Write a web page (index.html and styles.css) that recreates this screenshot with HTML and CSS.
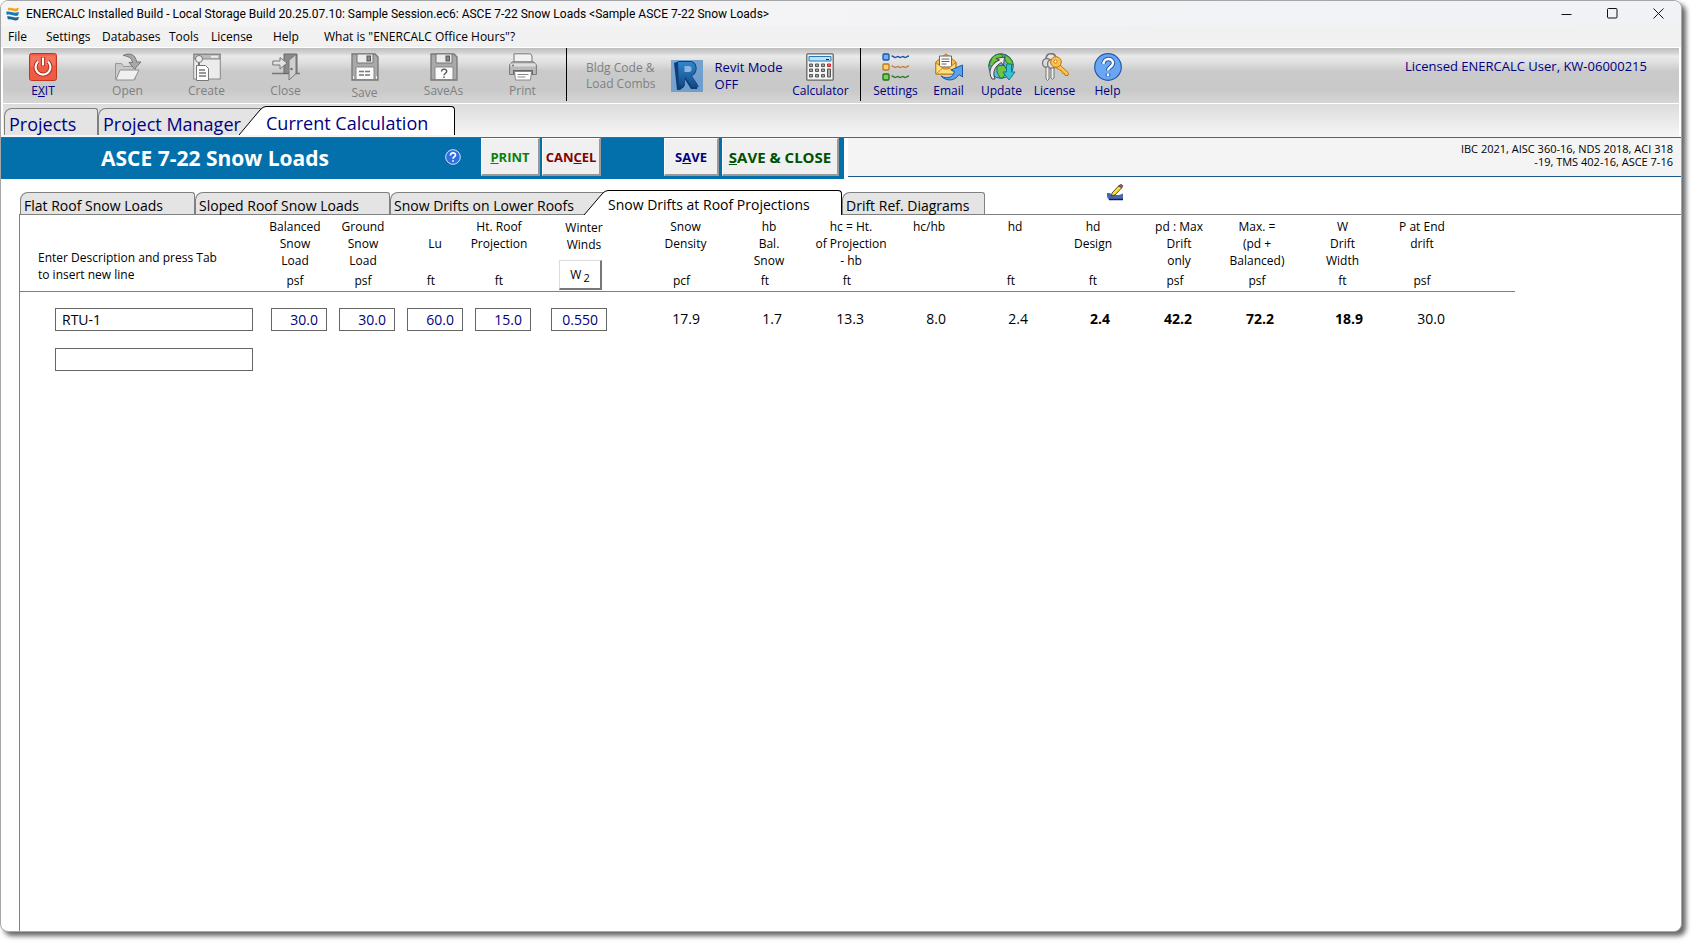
FILE: index.html
```html
<!DOCTYPE html>
<html lang="en">
<head>
<meta charset="utf-8">
<title>ENERCALC - ASCE 7-22 Snow Loads</title>
<link rel="stylesheet" href="styles.css">
</head>
<body>
<div class="window">
  <header class="titlebar">
    <svg class="app-icon" width="14" height="14" viewBox="0 0 14 14"><path d="M2 1c4-1 5 2 11-.5L12 4C8 5.500 6 2.500 2 3.500z" fill="#f5a623"/><path d="M0 5c4-1.500 6 2 13 0l-1 3.500C8 10 5 6.500 1 8z" fill="#1878b8"/><path d="M1 9.500c4-1 6 2 12 .5l-1 3C8 14.500 6 11.500 2 12.500z" fill="#1565a0"/></svg>
    <span class="title-text">ENERCALC Installed Build - Local Storage Build 20.25.07.10: Sample Session.ec6: ASCE 7-22 Snow Loads &lt;Sample ASCE 7-22 Snow Loads&gt;</span>
    <div class="win-controls">
      <button aria-label="Minimize"><svg width="11" height="11" viewBox="0 0 11 11"><path d="M.5 6.500h10" stroke="#111"/></svg></button>
      <button aria-label="Maximize"><svg width="11" height="11" viewBox="0 0 11 11"><rect x=".5" y=".5" width="9.500" height="9.500" rx="1" fill="none" stroke="#111"/></svg></button>
      <button aria-label="Close window"><svg width="11" height="11" viewBox="0 0 11 11"><path d="M.5.5l10 10M10.500.5l-10 10" stroke="#111"/></svg></button>
    </div>
  </header>
  <nav class="menubar">
    <button class="m-file">File</button><button class="m-settings">Settings</button><button class="m-data">Databases</button><button class="m-tools">Tools</button><button class="m-license">License</button><button class="m-help">Help</button><button>What is "ENERCALC Office Hours"?</button>
  </nav>

  <div class="toolbar">
    <div class="group files">
      <button class="tool exit">
        <svg width="28" height="28" viewBox="0 0 28 28"><rect x=".5" y=".5" width="27" height="27" rx="2" fill="#ef5a42" stroke="#c33422"/><path d="M1.500 14V2.500h25V12z" fill="#f58470" opacity=".6"/><path d="M9 8.500a7.500 7.500 0 1 0 10 0" fill="none" stroke="#a8281a" stroke-width="4"/><path d="M9 8.500a7.500 7.500 0 1 0 10 0" fill="none" stroke="#fff" stroke-width="2.200"/><path d="M14 4v9" stroke="#a8281a" stroke-width="4.200"/><path d="M14 4.500v8" stroke="#fff" stroke-width="2.200"/></svg>
        <span>E<u>X</u>IT</span></button>
      <button class="tool off">
        <svg width="28" height="28" viewBox="0 0 28 28"><path d="M1.500 26V10.500h6l2 3h12V26z" fill="#c8c8c8" stroke="#999"/><path d="M2 27l4-10h19l-5 10z" fill="#f0f0f0" stroke="#8e8e8e"/><path d="M9 2.500C16-1 22 2 22.500 9H27l-6.500 7L15 9.500h3.500C18 5 14 3 9 2.500z" fill="#a8a8a8" stroke="#777"/></svg>
        <span>Open</span></button>
      <button class="tool off">
        <svg width="28" height="28" viewBox="0 0 28 28"><rect x=".7" y="1" width="26.600" height="25" fill="#ececec" stroke="#888"/><path d="M1 1.500h26V6H1z" fill="#bbb" stroke="#888"/><path d="M18 3.700h7" stroke="#eee" stroke-width="2"/><circle cx="6" cy="6" r="3.500" fill="#eee" stroke="#777"/><path d="M6 9.500V13" stroke="#777" stroke-width="2"/><path d="M3.500 12.500h9l3 3v12h-12z" fill="#fff" stroke="#777"/><path d="M6 17h6M6 20h7M6 23h7" stroke="#777" stroke-width="1.300"/></svg>
        <span>Create</span></button>
      <button class="tool off">
        <svg width="28" height="28" viewBox="0 0 28 28"><path d="M0 20.500h28" stroke="#777" stroke-width="1.500"/><path d="M12 1h13v19.500H12z" fill="#8a8a8a" stroke="#666"/><path d="M17 7l7-5.500v19L17 27z" fill="#cfcfcf" stroke="#777"/><circle cx="19.500" cy="16" r="1.200" fill="#666"/><path d="M.8 8H8V4.500l7 5.500-7 6V12H.8z" fill="#e2e2e2" stroke="#777"/></svg>
        <span>Close</span></button>
      <button class="tool off low">
        <svg width="28" height="28" viewBox="0 0 28 28"><path d="M1 1h23l3 3v23H1z" fill="#a9a9a9" stroke="#777" stroke-width="1.300"/><path d="M6 1h16v9H6z" fill="#ececec" stroke="#777"/><rect x="16" y="3" width="3.500" height="5" fill="#888" stroke="#555"/><path d="M5 14h18v12.500H5z" fill="#fafafa" stroke="#888"/><path d="M8 18.500h12M8 22h12" stroke="#777" stroke-width="1.300" stroke-dasharray="5 1"/><path d="M2.500 23v3M25.500 23v3" stroke="#eee"/></svg>
        <span>Save</span></button>
      <button class="tool off">
        <svg width="28" height="28" viewBox="0 0 28 28"><path d="M1 1h23l3 3v23H1z" fill="#a9a9a9" stroke="#777" stroke-width="1.300"/><path d="M6 1h16v9H6z" fill="#ececec" stroke="#777"/><rect x="16" y="3" width="3.500" height="5" fill="#888" stroke="#555"/><path d="M5 14h18v12.500H5z" fill="#fafafa" stroke="#888"/><path d="M11.500 18.500c0-3.200 5.500-3 5.200 0-.2 1.800-2.600 1.700-2.600 3.800M14 23.600v1.500" fill="none" stroke="#555" stroke-width="1.400"/></svg>
        <span>SaveAs</span></button>
      <button class="tool off">
        <svg width="28" height="28" viewBox="0 0 28 28"><path d="M5 9V.8h16.500L23 3v6z" fill="#f2f2f2" stroke="#777"/><path d="M3 9h22l2.400 3v9.500H.6V12z" fill="#b9b9b9" stroke="#777"/><path d="M1.500 10.500h25v3h-25z" fill="#dedede"/><circle cx="4" cy="12.500" r=".9" fill="#666"/><path d="M4 17h20v4H4z" fill="#666"/><path d="M5.500 18.500h17l-1 8.500h-15z" fill="#fff" stroke="#888"/><path d="M8.500 21.500h11M8.500 24h8" stroke="#888"/></svg>
        <span>Print</span></button>
    </div>
    <div class="group modes">
      <button class="tool-text off">Bldg Code &amp;<br>Load Combs</button>
      <button class="tool-text revit">
        <svg width="32" height="32" viewBox="0 0 32 32"><defs><linearGradient id="rg" x1="0" y1="0" x2="1" y2="1"><stop offset="0" stop-color="#7fa6cf"/><stop offset="1" stop-color="#6c9ccc"/></linearGradient><linearGradient id="rf" x1="0" y1="0" x2="0" y2="1"><stop offset="0" stop-color="#2f86cf"/><stop offset="1" stop-color="#124a86"/></linearGradient></defs><path d="M0 0h32v32H0z" fill="url(#rg)"/><path d="M3 3l5-2h11c8 0 9 12 2 15l6 9-1 4h-6l-7-11v9l-4 3H6z" fill="#0d3f75"/><path d="M7 2h12c7 0 8 11 1 13.500L28 27h-7l-7-10.500V26H8z" fill="url(#rf)"/><path d="M13.500 6v6h4.500c3.500 0 3.500-6 0-6z" fill="#8fb4dc"/></svg>
        <span>Revit Mode<br>OFF</span></button>
      <button class="tool calc">
        <svg width="28" height="28" viewBox="0 0 28 28"><rect x=".8" y=".8" width="26.400" height="26.400" rx="1" fill="#f4f4f4" stroke="#666" stroke-width="1.300"/><path d="M3 3.500h22v4.500H3z" fill="#b8e4fb" stroke="#2878b8"/><path d="M20 6.500h3" stroke="#124"/><g fill="#aaa" stroke="#555"><path d="M3.500 11h3v2.500h-3zM9.500 11h3v2.500h-3zM15.500 11h3v2.500h-3zM3.500 16h3v2.500h-3zM9.500 16h3v2.500h-3zM15.500 16h3v2.500h-3zM3.500 21.500h3V24h-3zM9.500 21.500h3V24h-3zM15.500 21.500h3V24h-3zM21.500 16h3v8h-3z"/></g><path d="M21.500 11h3v2.500h-3z" fill="#ff6a5a" stroke="#c22"/></svg>
        <span>Calculator</span></button>
    </div>
    <div class="group links">
      <button class="tool">
        <svg width="28" height="28" viewBox="0 0 28 28"><rect x="1" y="1" width="6" height="6" rx="1" fill="#6cb0ff" stroke="#1e52a8" stroke-width="1.300"/><rect x="1" y="11" width="6" height="6" rx="1" fill="#ffd266" stroke="#b87a1c" stroke-width="1.300"/><rect x="1" y="21" width="6" height="6" rx="1" fill="#74d650" stroke="#256d1c" stroke-width="1.300"/><g fill="none" stroke-width="1.400"><path d="M9.500 3q1.500 0 2.500 1t2.500 0 2.500 0 2.500 0 2.500 0 2.500 0 2.500-1" stroke="#1e52a8"/><path d="M9.500 13q1.500 0 2.500 1t2.500 0 2.500 0 2.500 0 2.500 0 2.500 0 2.500-1" stroke="#c8803a"/><path d="M9.500 23q1.500 0 2.500 1t2.500 0 2.500 0 2.500 0 2.500 0 2.500 0 2.500-1" stroke="#2f7d28"/></g></svg>
        <span>Settings</span></button>
      <button class="tool">
        <svg width="28" height="28" viewBox="0 0 28 28"><path d="M.8 9L11 .8 21 9v12H.8z" fill="#f7bd4e" stroke="#bf7a14"/><path d="M4.500 3h12v11h-12z" fill="#fff" stroke="#666"/><path d="M6.500 6h8M6.500 8.500h8M6.500 11h5" stroke="#666"/><path d="M.8 9.500l8 6.500h4l8-6.500V21H.8z" fill="#ffdf7e" stroke="#bf7a14"/><path d="M1 21l8-7M21 21l-8-7" stroke="#c98c22"/><path d="M6 23c7 4 12 1 13.500-4.500L16 17l11.500-5v12l-3.500-2.500C20 28.500 11 28.500 6 23z" fill="#55a4f2" stroke="#1d57a8"/></svg>
        <span>Email</span></button>
      <button class="tool">
        <svg width="28" height="28" viewBox="0 0 28 28"><circle cx="13" cy="13" r="12.300" fill="#62b8f2" stroke="#1e5a9c"/><path d="M4 5c4-5 9-4 11-3l-2 5-6 2-3 5-3-2zM17 2c5 2 8 6 8 10l-5-1-3-4zM9 13l7-1 3 5-4 8h-3l-3-6z" fill="#6cc644" stroke="#2c7420"/><path d="M4 26C-1 18 4 10 11.500 7L8 5.500l8.500-1.500-1 9-2-3.500C7 13 4 19 7 26z" fill="#e9e9e9" stroke="#444"/><path d="M18.500 11h5v8H27l-6 8-6-8h3.500z" fill="#34c4cf" stroke="#147a86"/></svg>
        <span>Update</span></button>
      <button class="tool">
        <svg width="28" height="28" viewBox="0 0 28 28"><path d="M5 6C5-1 14-1 15 5" fill="none" stroke="#777" stroke-width="1.600"/><circle cx="6" cy="10" r="4.500" fill="#ddd" stroke="#777" stroke-width="1.400"/><circle cx="11" cy="11" r="4.500" fill="#ddd" stroke="#777" stroke-width="1.400"/><path d="M5 14h3v12l-1.500 1.500L5 26zM10 15h3v10l-1.500 1.500L10 25z" fill="#eee" stroke="#777"/><path d="M18 11l9.500 9-.5 2.500h-3l-.5-2-2-.3-.5-2L13.500 14z" fill="#ffc24a" stroke="#b8761a"/><circle cx="15" cy="9" r="5.300" fill="#ffc24a" stroke="#b8761a"/><circle cx="14.500" cy="8.500" r="1.600" fill="#fff" stroke="#b8761a"/></svg>
        <span>License</span></button>
      <button class="tool">
        <svg width="28" height="28" viewBox="0 0 28 28"><circle cx="14" cy="14" r="13.300" fill="#69a7f2" stroke="#2457ae" stroke-width="1.200"/><path d="M9.500 11c0-6.500 9.500-6.500 9.500-1 0 4-5 4-5 7.500M14 20.500v2.800" fill="none" stroke="#2558ad" stroke-width="4.400"/><path d="M9.500 11c0-6.500 9.500-6.500 9.500-1 0 4-5 4-5 7.500M14 20.500v2.500" fill="none" stroke="#fff" stroke-width="2.400"/></svg>
        <span>Help</span></button>
    </div>
    <p class="licensed">Licensed ENERCALC User, KW-06000215</p>
  </div>

  <div class="main-tabs" role="tablist">
    <button class="tab t-projects" role="tab">Projects</button>
    <button class="tab t-manager" role="tab">Project Manager</button>
    <button class="tab active t-current" role="tab" aria-selected="true"><svg class="slant" width="27" height="29" viewBox="0 0 27 29"><path d="M0 29L21 4Q24 .5 27 .5V29z" fill="#fff"/><path d="M0 29L21 4Q24 .5 27 .5" fill="none" stroke="#000"/></svg><span>Current Calculation</span></button>
  </div>

  <div class="calc-head">
    <div class="calc-blue">
      <h1>ASCE 7-22 Snow Loads</h1>
      <button class="info" aria-label="Help on this calculation"><svg width="16" height="16" viewBox="0 0 16 16"><circle cx="8" cy="8" r="7.300" fill="#2f6fe0" stroke="#cfe2ff"/><path d="M5.500 6.500c0-3.300 5-3.300 5-.5 0 1.800-2.500 1.800-2.500 3.800M8 11.200v1.600" fill="none" stroke="#fff" stroke-width="1.700"/></svg></button>
      <button class="act print"><span><u>P</u>RINT</span></button>
      <button class="act cancel"><span>CAN<u>C</u>EL</span></button>
      <button class="act save"><span>S<u>A</u>VE</span></button>
      <button class="act save-close"><span><u>S</u>AVE &amp; CLOSE</span></button>
    </div>
    <p class="codes">IBC 2021, AISC 360-16, NDS 2018, ACI 318<br>-19, TMS 402-16, ASCE 7-16</p>
  </div>

  <div class="sub-tabs" role="tablist">
    <button class="tab s-flat" role="tab">Flat Roof Snow Loads</button>
    <button class="tab s-sloped" role="tab">Sloped Roof Snow Loads</button>
    <button class="tab s-lower" role="tab">Snow Drifts on Lower Roofs</button>
    <button class="tab active s-proj" role="tab" aria-selected="true"><svg class="slant" width="24" height="25" viewBox="0 0 24 25"><path d="M0 25L18 4Q21 .5 24 .5V25z" fill="#fff"/><path d="M0 25L18 4Q21 .5 24 .5" fill="none" stroke="#000"/></svg><span>Snow Drifts at Roof Projections</span></button>
    <button class="tab s-ref" role="tab">Drift Ref. Diagrams</button>
    <button class="note" aria-label="Edit notes"><svg width="17" height="17" viewBox="0 0 17 17"><path d="M0 9h3l2 2h7l4-1.500V16H2L0 13z" fill="#4a68b0"/><path d="M2 15.500h14" stroke="#111c50" stroke-width="1.600"/><path d="M5 9l7-7.500 3 2L8 11l-3.500 1z" fill="#f7e32a" stroke="#222" stroke-width=".8"/><path d="M11.500 2L14 .3l2 1.500-1.500 2z" fill="#b06070" stroke="#222" stroke-width=".6"/></svg></button>
  </div>

  <main class="sheet">
    <table>
      <colgroup><col class="c-desc"><col class="c-in"><col class="c-in"><col class="c-in"><col class="c-in"><col class="c-wind"><col class="c-dens"><col class="c-out"><col class="c-out"><col class="c-out"><col class="c-out"><col class="c-out"><col class="c-out"><col class="c-out"><col class="c-w"><col class="c-out"><col class="c-end"></colgroup>
      <thead>
        <tr class="names">
          <th class="desc" rowspan="2">Enter Description and press Tab<br>to insert new line</th>
          <th class="lean">Balanced<br>Snow<br>Load</th>
          <th class="lean">Ground<br>Snow<br>Load</th>
          <th><br>Lu</th>
          <th class="lean">Ht. Roof<br>Projection</th>
          <th class="wind" rowspan="2">Winter<br>Winds<button>W<sub>2</sub></button></th>
          <th class="dens">Snow<br>Density</th>
          <th>hb<br>Bal.<br>Snow</th>
          <th>hc = Ht.<br>of Projection<br>- hb</th>
          <th class="lean">hc/hb</th>
          <th>hd</th>
          <th class="lean">hd<br>Design</th>
          <th>pd : Max<br>Drift<br>only</th>
          <th class="lean">Max. =<br>(pd +<br>Balanced)</th>
          <th class="lean">W<br>Drift<br>Width</th>
          <th class="lean far">P at End<br>drift</th>
          <th></th>
        </tr>
        <tr class="units">
          <th>psf</th><th>psf</th><th>ft</th><th>ft</th><th class="dens">pcf</th><th>ft</th><th>ft</th><th></th><th>ft</th><th>ft</th><th>psf</th><th>psf</th><th>ft</th><th class="far">psf</th><th></th>
        </tr>
      </thead>
      <tbody>
        <tr>
          <td class="desc"><input type="text" value="RTU-1" aria-label="Description"></td>
          <td class="in"><input type="text" value="30.0" aria-label="Balanced snow load"></td>
          <td class="in"><input type="text" value="30.0" aria-label="Ground snow load"></td>
          <td class="in"><input type="text" value="60.0" aria-label="Lu"></td>
          <td class="in"><input type="text" value="15.0" aria-label="Height of roof projection"></td>
          <td class="in"><input type="text" value="0.550" aria-label="Winter winds W2"></td>
          <td>17.9</td><td>1.7</td><td>13.3</td><td>8.0</td><td>2.4</td>
          <td class="key">2.4</td><td class="key">42.2</td><td class="key">72.2</td><td class="key">18.9</td><td>30.0</td><td></td>
        </tr>
        <tr>
          <td class="desc"><input type="text" value="" aria-label="New description"></td>
          <td colspan="16"></td>
        </tr>
      </tbody>
    </table>
  </main>
</div>
</body>
</html>
```
FILE: styles.css
```css
* { box-sizing: border-box; }

body {
  margin: 0;
  padding: 0 15px 16px 0;
  background: #fff;
  color: #000;
  font-family: "Open Sans", "Noto Sans", sans-serif;
  font-size: 12px;
}

button {
  margin: 0;
  padding: 0;
  border: 0;
  background: none;
  color: inherit;
  font: inherit;
}

svg { display: block; flex: none; }
p, h1 { margin: 0; }

.window {
  display: flex;
  flex-direction: column;
  min-height: calc(100vh - 16px);
  border: 1px solid #a4a6aa;
  border-radius: 8px;
  background: #fff;
  box-shadow: 4px 4px 5px rgba(0, 0, 0, .6);
  overflow: hidden;
}

/* Title bar and menus */
.titlebar {
  display: flex;
  align-items: center;
  height: 25px;
  padding-left: 5px;
  background: linear-gradient(90deg, #f6f5f5, #f0f2f6);
}
.title-text { margin-left: 6px; font-family: Roboto, "Open Sans", sans-serif; white-space: nowrap; }
.win-controls { display: flex; margin-left: auto; }
.win-controls button { display: grid; place-items: center; width: 46px; height: 25px; }

.menubar {
  display: flex;
  align-items: center;
  height: 21px;
  padding-left: 7px;
  background: #f1f1f1;
}
.menubar button { text-align: left; white-space: nowrap; }
.m-file { width: 38px; }
.m-settings { width: 56px; }
.m-data { width: 67px; }
.m-tools { width: 42px; }
.m-license { width: 62px; }
.m-help { width: 51px; }

/* Icon toolbar */
.toolbar {
  display: flex;
  height: 57px;
  margin: 0 2px;
  border-top: 1px solid #fff;
  border-bottom: 1px solid #fff;
  background: linear-gradient(#bebebe 0, #d4d4d4 5px, #eaeaea 8px, #dedede 15px, #cacaca 23px, #c9c9c9 42px, #d6d6d6 100%);
  color: #000080;
}
.group { display: flex; flex: none; height: 53px; padding-top: 5px; }
.group + .group { border-left: 1px solid #000; }
.files { width: 563px; }
.tool {
  display: flex;
  flex: none;
  flex-direction: column;
  align-items: center;
  gap: 1px;
  width: 79px;
  line-height: 17px;
}
.tool.exit { width: 85px; padding-right: 5px; }
.tool.low { gap: 3px; }
.off { color: #808080; }
.modes { width: 294px; padding-left: 19px; }
.tool-text {
  display: flex;
  flex: none;
  align-items: center;
  height: 45px;
  line-height: 16px;
  text-align: left;
  white-space: nowrap;
}
.revit { gap: 12px; margin-left: 15px; font-size: 13px; line-height: 17px; }
.tool.calc { width: 76px; }
.links { padding-left: 8px; }
.links .tool { width: 53px; }
.licensed { margin: 9px 32px 0 auto; font-size: 13px; line-height: 18px; white-space: nowrap; }

/* Tabs */
.tab {
  flex: none;
  padding: 0 0 0 4px;
  border: 1px solid #808080;
  border-bottom: 0;
  border-radius: 8px 3px 0 0;
  background: #e4e4e4;
  text-align: left;
  white-space: nowrap;
}
.tab.active {
  position: relative;
  display: flex;
  padding: 0;
  border: 0;
  background: none;
  z-index: 1;
}
.tab.active span {
  flex: 1;
  height: 100%;
  border-top: 1px solid #000;
  border-right: 1px solid #000;
  border-top-right-radius: 4px;
  background: #fff;
}

.main-tabs {
  display: flex;
  align-items: flex-end;
  height: 33px;
  margin: 0 2px;
  padding: 0 0 2px 1px;
  background: linear-gradient(#dcdcdc, #f6f6f6);
  color: #000080;
  font-size: 18px;
}
.main-tabs .tab { height: 27px; padding-top: 5px; line-height: 21px; }
.main-tabs .tab.active { height: 29px; margin-left: -26px; padding: 0; line-height: 32px; }
.t-projects { width: 94px; }
.t-manager { width: 167px; }
.t-current { width: 216px; }

/* Calculation header */
.calc-head {
  display: flex;
  height: 42px;
  border-top: 1px solid #606060;
}
.calc-blue { display: flex; flex: none; width: 843px; background: #0470ab; }
h1 {
  width: 444px;
  padding-left: 100px;
  color: #fff;
  font-size: 21px;
  font-weight: 700;
  line-height: 41px;
}
.info { width: 16px; height: 37px; margin-right: 20px; }
.act {
  height: 38px;
  border: 1px solid #fff;
  border-right: 2px solid #999;
  border-bottom: 2px solid #999;
  background: #f0f0f0;
  font-size: 13px;
  font-weight: 700;
}
.print { width: 59px; color: #0a820a; }
.cancel { width: 59px; margin-left: 2px; color: #860000; }
.save { width: 55px; margin-left: 63px; color: #000080; }
.save-close { width: 117px; margin-left: 3px; color: #005000; font-size: 15px; }
.codes {
  flex: 1;
  height: 39px;
  margin-left: 4px;
  padding: 4px 8px 0 0;
  border-bottom: 1px solid #1c5a88;
  background: #f4f4f4;
  font-size: 11px;
  line-height: 13px;
  text-align: right;
}

.sub-tabs {
  display: flex;
  align-items: flex-end;
  height: 36px;
  margin-left: 18px;
  padding-left: 1px;
  border-bottom: 1px solid #808080;
  font-size: 14px;
}
.sub-tabs .tab { height: 22px; padding: 5px 0 0 3px; line-height: 16px; }
.sub-tabs .tab.active { height: 25px; margin: 0 0 -1px -24px; padding: 0; line-height: 27px; }
.s-flat { width: 175px; }
.s-sloped { width: 195px; }
.s-lower { width: 218px; }
.s-proj { width: 258px; }
.s-ref { width: 143px; }
.note { margin: 0 0 13px 122px; }

/* Drift sheet */
.sheet { flex: 1; margin-left: 18px; border-left: 1px solid #808080; }
table { table-layout: fixed; width: 1495px; border-collapse: collapse; }
.c-desc { width: 245px; }
.c-in { width: 68px; }
.c-wind { width: 84px; }
.c-dens { width: 107px; }
.c-out { width: 82px; }
.c-w { width: 89px; }
.c-end { width: 42px; }

th { padding: 0; font-weight: 400; line-height: 17px; white-space: nowrap; vertical-align: top; }
.names th { height: 57px; padding-top: 3px; }
.units th { height: 19px; padding-right: 8px; line-height: 17px; }
thead { border-bottom: 1px solid #808080; }
.names .lean { padding-right: 8px; }
.names .far, .units .far { padding-right: 20px; }
.names .dens, .units .dens { padding-left: 22px; }
.names .desc { padding: 0 0 8px 18px; text-align: left; vertical-align: bottom; }
.names .wind { padding-top: 4px; padding-left: 10px; }
.wind button {
  display: block;
  width: 43px;
  height: 30px;
  margin: 7px auto 0 12px;
  border: 1px solid #dcdcdc;
  border-right: 2px solid #777;
  border-bottom: 2px solid #777;
  background: #fff;
}
.wind sub { margin-left: 2px; font-size: 11px; line-height: 11px; }

td { height: 40px; padding: 0 28px 0 0; font-size: 14px; text-align: right; vertical-align: top; }
tbody tr:first-child td { height: 57px; padding-top: 16px; line-height: 21px; }
td.in { padding-right: 0; text-align: center; }
td.desc, tbody tr:first-child td.desc { padding-right: 0; padding-left: 35px; text-align: left; }
td input {
  display: block;
  width: 56px;
  height: 23px;
  margin: 0 auto;
  padding: 0 8px;
  border: 1px solid #666;
  background: #fff;
  color: #000080;
  font: inherit;
  text-align: right;
}
td.desc input { width: 198px; margin: 0; padding: 0 6px; color: #000; text-align: left; }
.key { font-weight: 700; }
```
